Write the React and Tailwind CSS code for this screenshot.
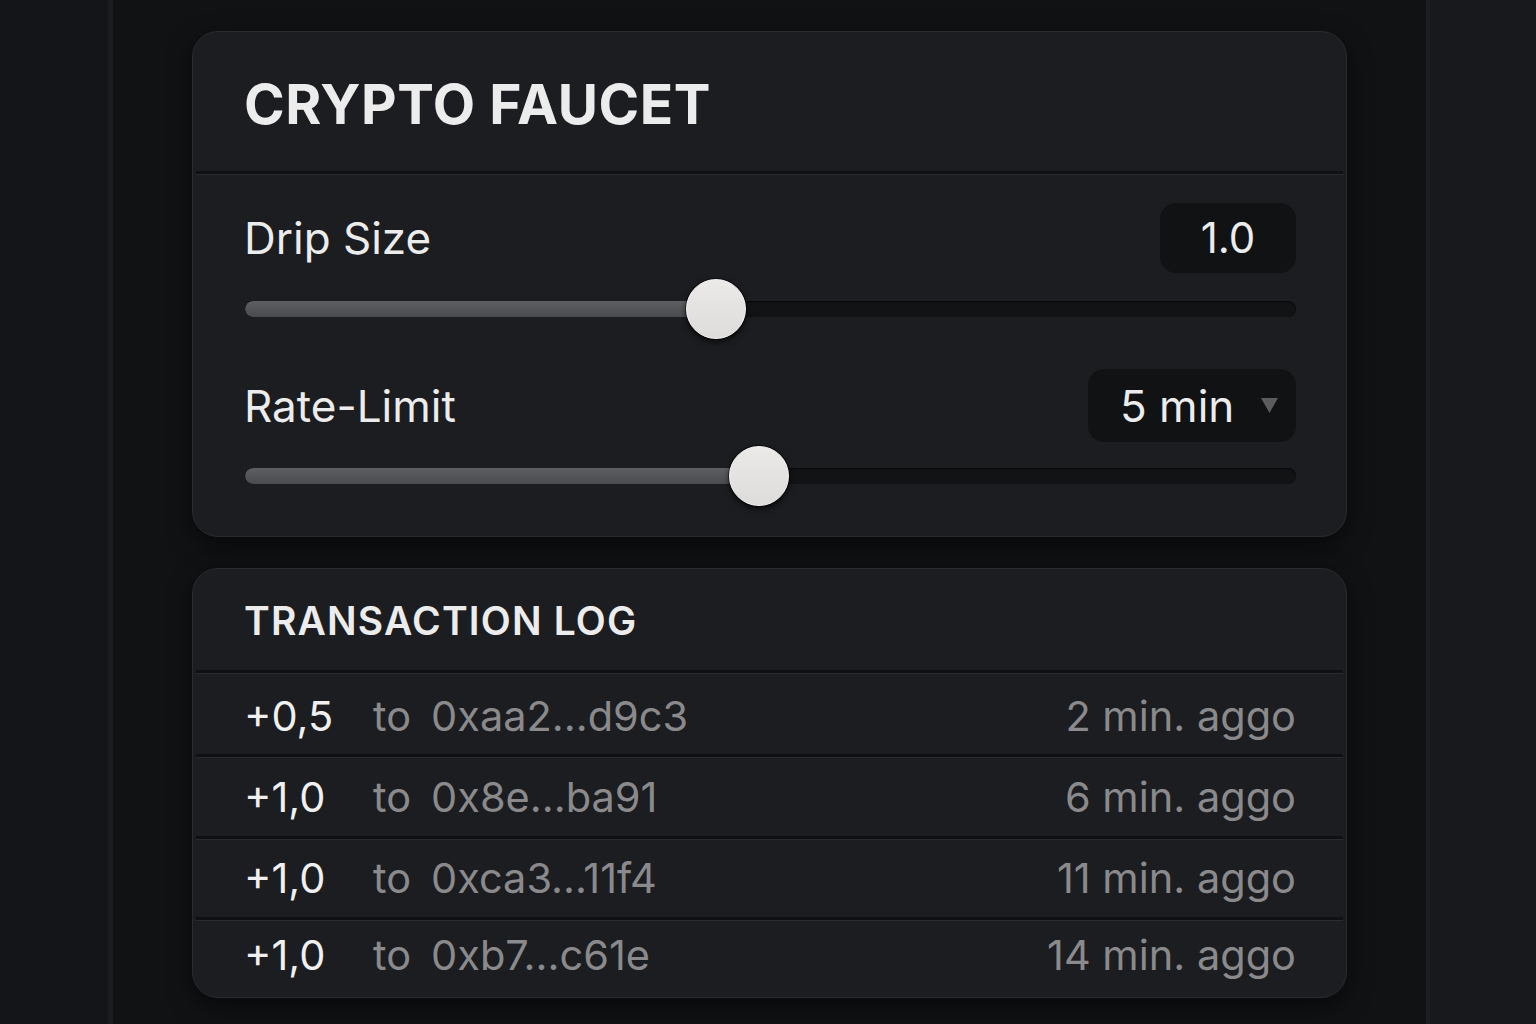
import React from "react";

function Slider({ pct }) {
  return (
    <div className="relative h-[60px] flex items-center">
      <div className="w-full h-[16px] rounded-full bg-[#121315] shadow-[inset_0_1px_2px_rgba(0,0,0,0.6)] overflow-hidden">
        <div
          className="h-full rounded-full bg-gradient-to-b from-[#5e5f62] to-[#4a4b4e]"
          style={{ width: `${pct}%` }}
        />
      </div>
      <div
        className="absolute top-0 w-[60px] h-[60px] -ml-[30px] rounded-full bg-gradient-to-b from-[#ebeae8] to-[#dddcda] border border-[#f4f3f1] shadow-[0_3px_6px_rgba(0,0,0,0.7),0_0_0_1px_rgba(0,0,0,0.5)]"
        style={{ left: `${pct}%` }}
      />
    </div>
  );
}

function Divider() {
  return (
    <div className="mx-[3px]">
      <div className="h-[3px] bg-[#0f1012]" />
      <div className="h-px bg-[#2a2b2f]" />
    </div>
  );
}

const rows = [
  ["+0,5", "0xaa2...d9c3", "2 min. aggo", "h-[80px] pt-[6px]"],
  ["+1,0", "0x8e...ba91", "6 min. aggo", "h-[78px] pt-[2px]"],
  ["+1,0", "0xca3...11f4", "11 min. aggo", "h-[77px] pt-[0px]"],
  ["+1,0", "0xb7...c61e", "14 min. aggo", "h-[76px] pb-[6px]"],
];

export default function App() {
  return (
    <div
      className="w-[1536px] h-[1024px] flex overflow-hidden bg-[#111214] text-[#ececec]"
      style={{ fontFamily: "Inter, 'Noto Sans', sans-serif" }}
    >
      <div className="w-[108px] bg-[#141518]" />
      <div className="w-[5px] bg-[#1c1d20]" />
      <div className="flex-1 bg-[#111214] px-[79px] pt-[31px] flex flex-col gap-[31px]">
        {/* Faucet card */}
        <div className="rounded-[26px] bg-[#1c1d20] border border-[#2a2b2f] shadow-[0_8px_24px_rgba(0,0,0,0.55)]">
          <div className="h-[139px] flex items-center pl-[51px] pr-[50px] pt-[6px]">
            <h1 className="text-[55px] font-bold tracking-[0.01em] leading-none text-[#ececec]">
              CRYPTO FAUCET
            </h1>
          </div>
          <Divider />
          <div className="pl-[52px] pr-[50px] pt-[28px] pb-[30px]">
            <div className="flex items-center justify-between h-[70px]">
              <span className="text-[44px] leading-none -ml-[1px]">Drip Size</span>
              <div className="w-[136px] h-[70px] rounded-[16px] bg-[#111214] flex items-center justify-center text-[42px] leading-none">
                1.0
              </div>
            </div>
            <div className="mt-[6px]">
              <Slider pct={44.8} />
            </div>
            <div className="flex items-center justify-between h-[73px] mt-[30px]">
              <span className="text-[44px] leading-none -ml-[1px]">Rate-Limit</span>
              <div className="w-[208px] h-[73px] rounded-[16px] bg-[#111214] flex items-center pl-[32px] pr-[18px] justify-between">
                <span className="text-[44px] leading-none">5 min</span>
                <svg width="17" height="15" viewBox="0 0 17 15">
                  <polygon points="0,0 17,0 8.5,15" fill="#5c5c5f" />
                </svg>
              </div>
            </div>
            <div className="mt-[4px]">
              <Slider pct={48.9} />
            </div>
          </div>
        </div>

        {/* Transaction log */}
        <div className="rounded-[26px] bg-[#1c1d20] border border-[#2a2b2f] shadow-[0_8px_24px_rgba(0,0,0,0.55)]">
          <div className="h-[101px] flex items-center pl-[51px] pr-[50px] pt-[2px]">
            <h2 className="text-[39px] font-semibold tracking-[0.03em] leading-none text-[#ececec]">
              TRANSACTION LOG
            </h2>
          </div>
          {rows.map((r, i) => (
            <div key={i}>
              <Divider />
              <div className={`${r[3]} flex items-center pl-[51px] pr-[50px] text-[41.5px] leading-none`}>
                <span className="w-[129px] text-[#f0f0f0]">{r[0]}</span>
                <span className="text-[#8a8a8c]">to</span>
                <span className="ml-[20px] text-[#8a8a8c]">{r[1]}</span>
                <span className="ml-auto text-[#8a8a8c]">{r[2]}</span>
              </div>
            </div>
          ))}
        </div>
      </div>
      <div className="w-[4px] bg-[#1c1d20]" />
      <div className="w-[106px] bg-[#18191c]" />
    </div>
  );
}
